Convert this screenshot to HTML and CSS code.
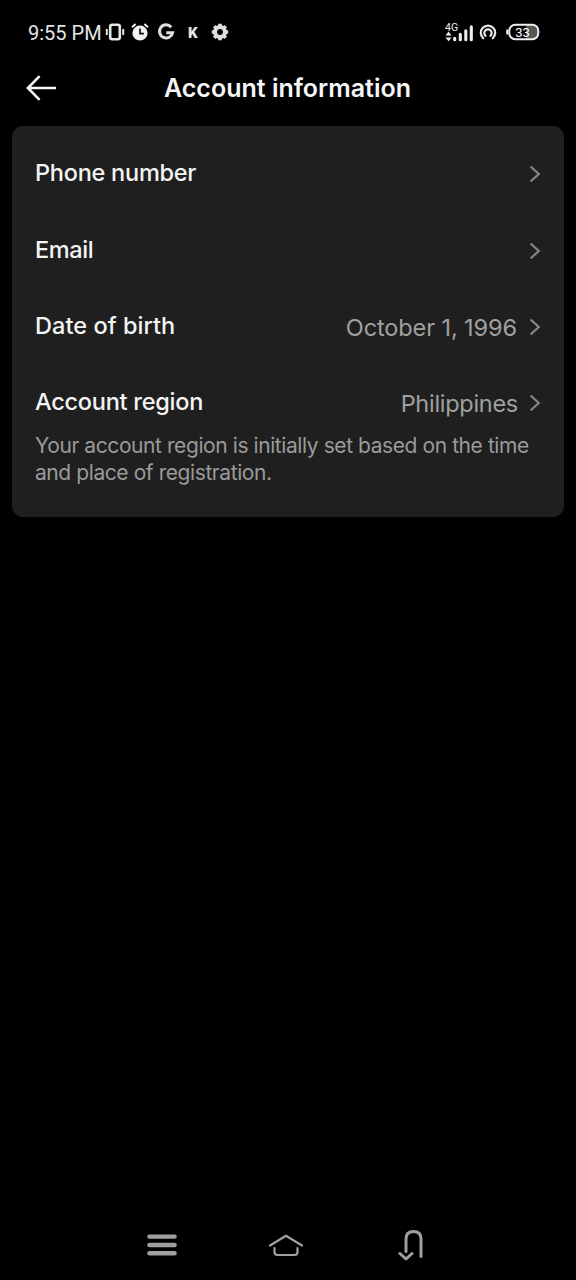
FILE: index.html
```html
<!DOCTYPE html>
<html lang="en">
<head>
<meta charset="utf-8">
<title>Account information</title>
<link rel="stylesheet" href="styles.css">
</head>
<body>
<div class="screen">
  <div class="status">
    <span class="time">9:55 PM</span>
    <svg class="vibrate" width="20" height="18" viewBox="0 0 20 18" fill="none" stroke="#e6e6e6" stroke-width="2"><rect x="5.2" y="1.8" width="9.6" height="14.4" rx="2" stroke-width="2.6"/><path d="M1.8 6v6M18.2 6v6" stroke-width="2"/></svg>
    <svg class="alarm" width="18" height="18" viewBox="0 0 18 18"><circle cx="9" cy="10" r="7.6" fill="#f2f2f2"/><path d="M1 4.2 4.6 1M17 4.2 13.4 1" stroke="#f2f2f2" stroke-width="2"/><path d="M9 5.6v5h3.8" fill="none" stroke="#000" stroke-width="1.6"/></svg>
    <svg class="google" width="18" height="18" viewBox="0 0 18 18" fill="none" stroke="#e0e0e0" stroke-width="3"><path d="M14.2 4.2A6.6 6.6 0 1 0 15.6 9.7H9.3"/></svg>
    <span class="kmark">K</span>
    <svg class="gear" width="18" height="18" viewBox="0 0 18 18" fill="none" stroke="#e0e0e0"><circle cx="9" cy="9" r="4.9" stroke-width="4"/><path d="M9 .8v3M9 14.2v3M.8 9h3M14.2 9h3M3.2 3.2l2.1 2.1M12.7 12.7l2.1 2.1M3.2 14.8l2.1-2.1M12.7 5.3l2.1-2.1" stroke-width="3.6"/></svg>
    <svg class="signal" width="30" height="22" viewBox="0 0 30 22"><text class="net" x="0" y="9.6">4G</text><path d="m3.5 10.6 3 3.8H.5zM3.5 20.2l3-3.8H.5z" fill="#eee"/><path d="M9.7 18.7v-1.5M15.3 18.7v-5.5M20.8 18.7v-9M26.3 18.7v-13" stroke="#eee" stroke-width="3.1" stroke-linecap="round"/></svg>
    <svg class="hotspot" width="18" height="18" viewBox="0 0 18 18" fill="none" stroke="#e8e8e8" stroke-width="2.2" stroke-linecap="round"><path d="M4.2 15.2a7.2 7.2 0 1 1 9.6 0"/><path d="M6.6 12.8a3.7 3.7 0 1 1 4.8 0"/></svg>
    <svg class="battery" width="34" height="18" viewBox="0 0 34 18"><path d="M20 2h7a5 5 0 0 1 5 5v4a5 5 0 0 1-5 5h-7z" fill="#555"/><rect x="3.3" y="1.7" width="29" height="14.6" rx="6" fill="none" stroke="#eee" stroke-width="2"/><path d="M1.2 6.5v5" stroke="#eee" stroke-width="2"/><text class="pct" x="16.5" y="13.6">33</text></svg>
  </div>

  <div class="header">
    <svg class="back" width="32" height="28" viewBox="0 0 32 28" fill="none" stroke="#f6f6f6" stroke-width="2.6"><path d="M14.6 2.2 2.9 14l11.7 11.8M3 14h28"/></svg>
    <div class="title">Account information</div>
  </div>

  <div class="card">
    <div class="row"><span class="label phone">Phone number</span><svg class="chev" width="12" height="18" viewBox="0 0 12 18"><path d="m1.6 1.5 8.2 7.5-8.2 7.5"/></svg></div>
    <div class="row"><span class="label email">Email</span><svg class="chev" width="12" height="18" viewBox="0 0 12 18"><path d="m1.6 1.5 8.2 7.5-8.2 7.5"/></svg></div>
    <div class="row"><span class="label birth">Date of birth</span><span class="value date">October 1, 1996</span><svg class="chev" width="12" height="18" viewBox="0 0 12 18"><path d="m1.6 1.5 8.2 7.5-8.2 7.5"/></svg></div>
    <div class="row"><span class="label region">Account region</span><span class="value country">Philippines</span><svg class="chev" width="12" height="18" viewBox="0 0 12 18"><path d="m1.6 1.5 8.2 7.5-8.2 7.5"/></svg></div>
    <div class="note">Your account region is initially set based on the time<br>and place of registration.</div>
  </div>

  <div class="nav">
    <svg class="menu" width="30" height="22" viewBox="0 0 30 22" stroke="#a0a0a0" stroke-width="4.4" stroke-linecap="round"><path d="M2.4 2.6h25.2M2.4 11h25.2M2.4 19.2h25.2"/></svg>
    <svg class="home" width="36" height="24" viewBox="0 0 36 24" fill="none" stroke="#a0a0a0" stroke-width="2.2" stroke-linecap="round" stroke-linejoin="round"><path d="M2 12.5 18 2.8l16 9.7M6.5 15v4q0 3 3 3h17q3 0 3-3v-4"/></svg>
    <svg class="return" width="28" height="32" viewBox="0 0 28 32" fill="none" stroke="#a0a0a0" stroke-width="3" stroke-linecap="round" stroke-linejoin="round"><path d="M8 22.5V10q0-7.5 7.5-7.5T23 10v17.5M1.9 24.5 8 30l6-5.5"/></svg>
  </div>
</div>
</body>
</html>
```
FILE: styles.css
```css
* { box-sizing: border-box; }
body { margin: 0; background: #000; font-family: Inter, "Liberation Sans", sans-serif; }
svg { display: block; flex: none; }
.screen { width: 576px; height: 1280px; display: flex; flex-direction: column; background: #000; }

.status { height: 64px; padding: 0 36px 0 28px; display: flex; align-items: center; color: #e6e6e6; }
.time { width: 77px; font: 400 20px/24px Roboto, sans-serif; white-space: nowrap; padding-top: 2px; }
.alarm { margin-left: 6px; }
.google { margin-left: 8px; }
.kmark { width: 12px; margin-left: 13px; font: 900 15px/18px Roboto, sans-serif; padding-top: 1px; }
.gear { margin-left: 11px; }
.signal { margin-left: auto; }
.net { font: 400 10.5px Roboto, sans-serif; fill: #eee; }
.hotspot { margin-left: 4px; }
.battery { margin-left: 9px; }
.pct { font: 400 13px Roboto, sans-serif; fill: #fff; text-anchor: middle; }

.header { height: 62px; padding: 10px 0 0 25px; display: flex; align-items: flex-start; }
.title { flex: 1; margin-left: 107px; font-size: 25px; font-weight: 600; line-height: 28px; color: #f6f6f6; white-space: nowrap; }

.card { height: 391px; margin: 0 12px; padding: 10px 23px 0 23px; border-radius: 11px; background: #1f1f1f; }
.row { height: 76.4px; display: flex; align-items: center; }
.label { font-size: 23.5px; font-weight: 500; line-height: 30px; color: #f4f4f4; white-space: nowrap; padding-bottom: 2px; margin-right: auto; }
.phone { letter-spacing: -0.25px; }
.email { letter-spacing: -0.4px; }
.birth { letter-spacing: 0.05px; }
.region { letter-spacing: -0.25px; }
.value { font-size: 23.5px; line-height: 30px; color: #a0a0a0; white-space: nowrap; padding-top: 2px; margin-right: 11px; }
.date { letter-spacing: -0.1px; margin-right: 12px; }
.country { letter-spacing: -0.28px; }
.chev path { fill: none; stroke: #868686; stroke-width: 2.2; }
.note { margin-top: -10px; font-size: 21px; line-height: 27px; letter-spacing: -0.42px; color: #9a9a9a; white-space: nowrap; }

.nav { margin-top: auto; height: 70px; padding: 0 150px 0 147px; display: flex; align-items: center; justify-content: space-between; }
.home { margin-right: 4px; }
```
